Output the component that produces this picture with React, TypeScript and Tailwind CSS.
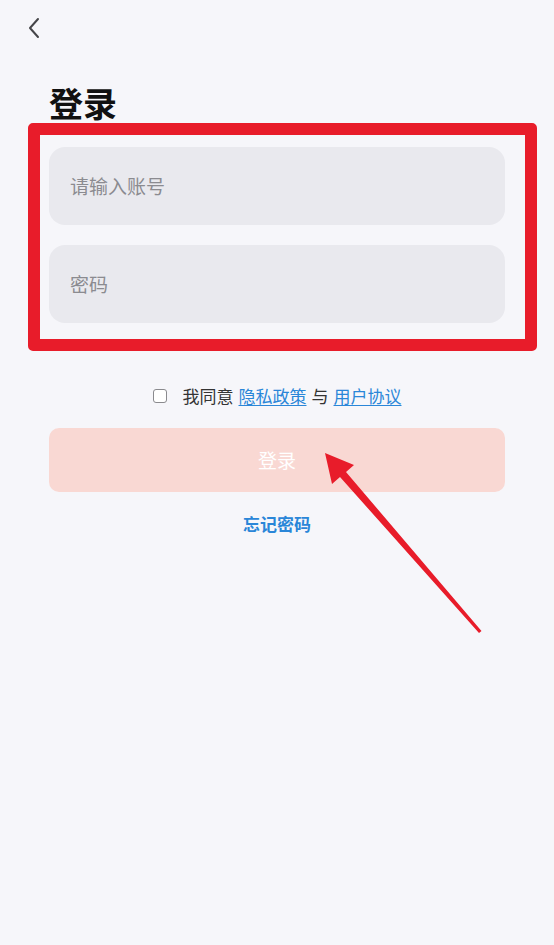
import React from "react";

const FONT = {
  fontFamily: '"Noto Sans CJK SC", "Noto Sans", sans-serif',
};

export default function App() {
  return (
    <div className="relative min-h-screen w-full bg-[#f6f6fa]" style={FONT}>
      {/* back */}
      <div className="pl-[27px] pt-[17px]">
        <svg width="14" height="22" viewBox="0 0 14 22" fill="none">
          <path
            d="M11 2 L3 11 L11 20"
            stroke="#454549"
            strokeWidth="2"
            strokeLinecap="round"
            strokeLinejoin="round"
          />
        </svg>
      </div>

      <div className="px-[49px]">
        <h1 className="mt-[44px] text-[34px] font-bold leading-[40px] text-[#111]">
          登录
        </h1>

        <div className="mt-[24px] flex h-[78px] items-center rounded-[16px] bg-[#e9e9ee] px-[21px] text-[19px] text-[#8b8b90]">
          请输入账号
        </div>
        <div className="mt-[20px] flex h-[78px] items-center rounded-[16px] bg-[#e9e9ee] px-[21px] text-[19px] text-[#8b8b90]">
          密码
        </div>

        <div className="mt-[61px] flex h-[24px] items-center justify-center text-[17px] text-[#333]">
          <span className="mr-[16px] h-[14px] w-[14px] rounded-[3px] border border-[#8a8a8e] bg-white" />
          <span>我同意</span>
          <span className="ml-[5px] text-[#2a86d8] underline underline-offset-2">隐私政策</span>
          <span className="mx-[5px]">与</span>
          <span className="text-[#2a86d8] underline underline-offset-2">用户协议</span>
        </div>

        <button
          type="button"
          className="mt-[20px] flex h-[64px] w-full items-center justify-center rounded-[10px] bg-[#f9d8d3] text-[19px] text-white"
        >
          登录
        </button>

        <div className="mt-[20px] text-center text-[17px] font-bold leading-[24px] text-[#2a86d8]">
          忘记密码
        </div>
      </div>

      {/* annotation box */}
      <div className="absolute left-[28px] top-[123px] h-[228px] w-[509px] rounded-[5px] border-[12px] border-[#e81c2a]" />

      {/* annotation arrow */}
      <svg
        className="absolute left-0 top-0"
        width="554"
        height="945"
        viewBox="0 0 554 945"
      >
        <polygon
          points="325,453 354,465 346,472 481.5,631 479,633 340,477 332,484"
          fill="#e81c2a"
        />
      </svg>
    </div>
  );
}
